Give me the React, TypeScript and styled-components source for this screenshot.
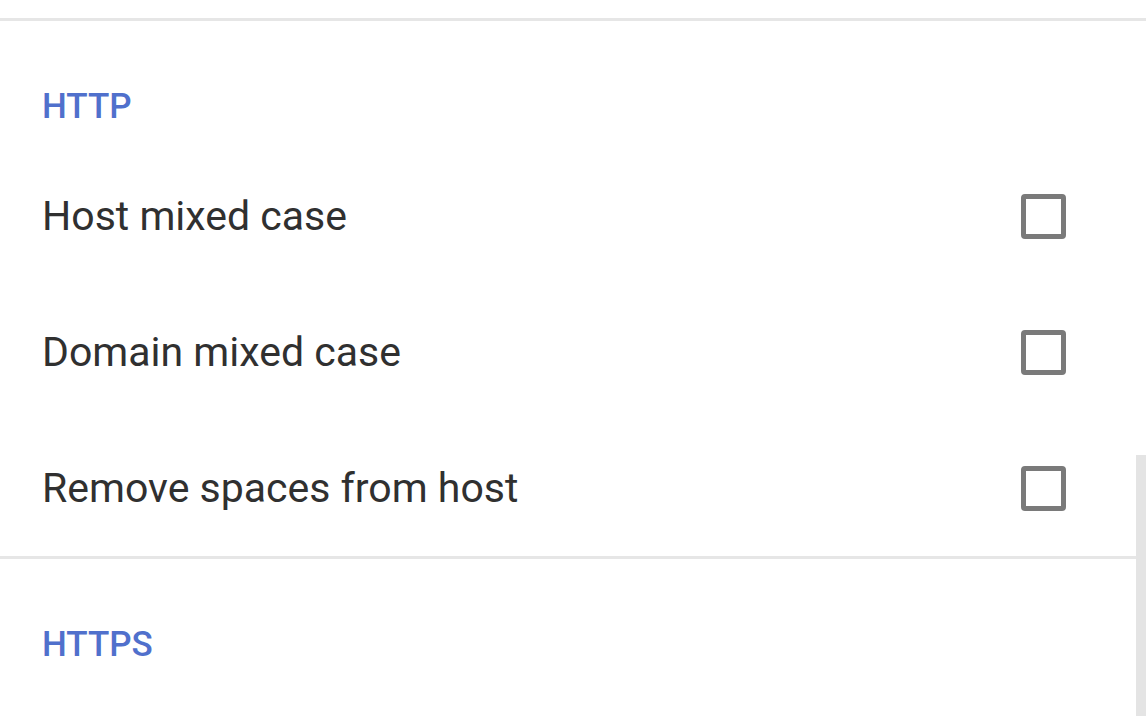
import React, { FC } from "react";
import styled, { createGlobalStyle } from "styled-components";

const GlobalStyle = createGlobalStyle`
  html, body {
    margin: 0;
    padding: 0;
    background: #ffffff;
    font-family: Roboto, "Noto Sans", sans-serif;
    overflow: hidden;
  }
`;

type Pref = { title: string; checked?: boolean };

const sections: { name: string; prefs: Pref[] }[] = [
  {
    name: "HTTP",
    prefs: [
      { title: "Host mixed case" },
      { title: "Domain mixed case" },
      { title: "Remove spaces from host" },
    ],
  },
  { name: "HTTPS", prefs: [] },
];

const Screen: FC = () => (
  <Container>
    <TopSpacer />
    {sections.map((section) => (
      <Section key={section.name}>
        <Divider />
        <Category>{section.name}</Category>
        {section.prefs.map((pref) => (
          <Row key={pref.title}>
            <Title>{pref.title}</Title>
            <CheckBox $checked={!!pref.checked} />
          </Row>
        ))}
      </Section>
    ))}
    <ScrollThumb />
  </Container>
);

const Container = styled.div`
  position: relative;
  width: 1146px;
  height: 716px;
  overflow: hidden;
  background: #ffffff;
`;

const TopSpacer = styled.div`
  height: 18px;
`;

const Section = styled.div`
  display: flex;
  flex-direction: column;
`;

const Divider = styled.div`
  height: 3px;
  background: #e6e6e6;
`;

const Category = styled.div`
  padding: 66px 42px 21px;
  height: 40px;
  line-height: 40px;
  font-size: 35px;
  font-weight: 500;
  color: #5070cc;
`;

const Row = styled.div`
  display: flex;
  align-items: center;
  justify-content: space-between;
  height: 136px;
  padding: 0 80px 0 42px;
`;

const Title = styled.span`
  font-size: 41px;
  color: #303030;
`;

const CheckBox = styled.span<{ $checked: boolean }>`
  box-sizing: border-box;
  width: 45px;
  height: 45px;
  border: 5px solid #7a7a7a;
  border-radius: 4px;
  background: ${(p) => (p.$checked ? "#5070cc" : "transparent")};
`;

const ScrollThumb = styled.div`
  position: absolute;
  right: 0;
  top: 455px;
  width: 10px;
  bottom: 0;
  background: #e4e4e4;
`;

const App: FC = () => (
  <>
    <GlobalStyle />
    <Screen />
  </>
);

export default App;
